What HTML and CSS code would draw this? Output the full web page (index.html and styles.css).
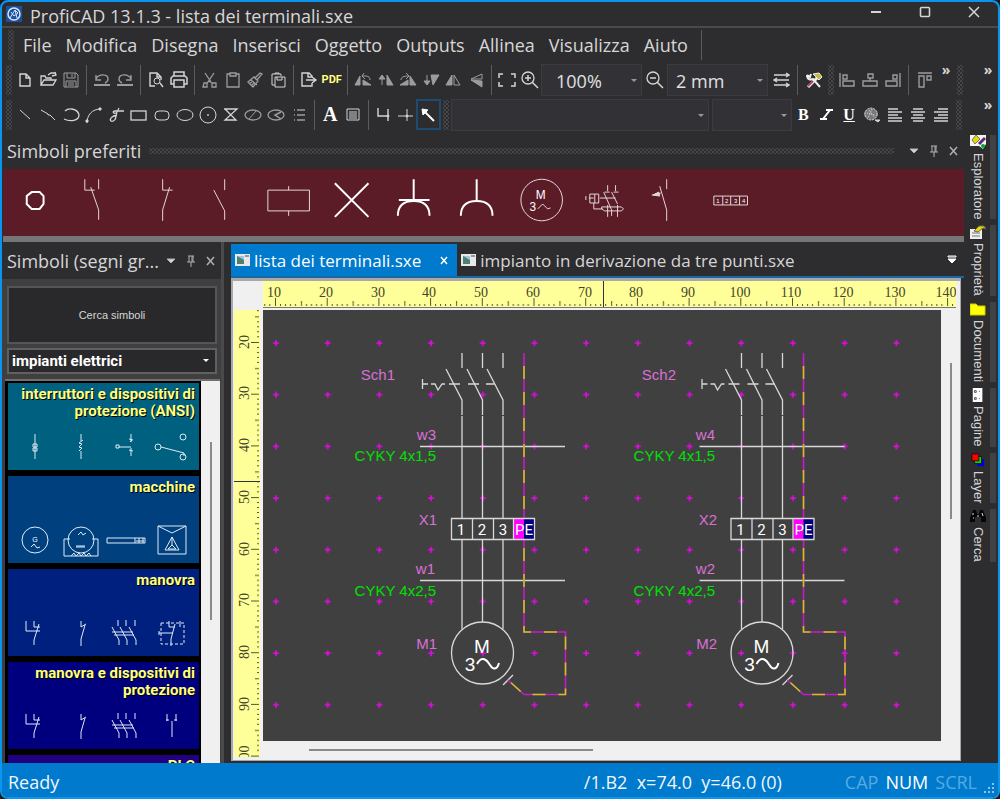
FILE: index.html
```html
<!DOCTYPE html>
<html lang="it">
  <head>
    <meta charset="utf-8">
    <title>ProfiCAD 13.1.3 - lista dei terminali.sxe</title>
    <link rel="stylesheet" href="styles.css">
  </head>
  <body>
    <header class="titlebar">
      <svg class="logo" viewBox="0 0 16 16"><rect width="16" height="16" fill="#1d4f9c"/><circle cx="8" cy="8" r="6" fill="none" stroke="#d5e4f7" stroke-width="1.5"/><path d="M4 12 9 4l3 3-4 3-3-4M9 4l2 8" fill="none" stroke="#d5e4f7"/></svg>
      <h1 class="title">ProfiCAD 13.1.3 - lista dei terminali.sxe</h1>
      <button class="win-btn" aria-label="Riduci"><svg class="icon" viewBox="0 0 18 18"><path d="M4 7h10" stroke-width="2"/></svg></button>
      <button class="win-btn" aria-label="Ingrandisci"><svg class="icon" viewBox="0 0 18 18"><rect x="4.500" y="2.500" width="9" height="9" rx="1" stroke-width="1.600"/></svg></button>
      <button class="win-btn" aria-label="Chiudi"><svg class="icon" viewBox="0 0 18 18"><path d="m4 2 10 10M14 2 4 12" stroke-width="1.500"/></svg></button>
    </header>

    <nav class="menubar">
      <span class="grip"></span>
      <button>File</button>
      <button>Modifica</button>
      <button>Disegna</button>
      <button>Inserisci</button>
      <button>Oggetto</button>
      <button>Outputs</button>
      <button>Allinea</button>
      <button>Visualizza</button>
      <button>Aiuto</button>
      <span class="sep"></span>
    </nav>

    <div class="toolbar">
      <span class="grip"></span>
      <div class="group three">
        <button aria-label="Nuovo"><svg class="icon" viewBox="0 0 18 18"><path d="M4 3h6l4 4v8H4zM10 3v4h4" stroke-width="1.400"/></svg></button>
        <button aria-label="Apri"><svg class="icon" viewBox="0 0 18 18"><path d="M2 14V5h4l1 2h5v2M2 14l3-5h12l-3 5zM9 4l3-2h4M13 5l4-1-1-3" stroke-width="1.300"/></svg></button>
        <button aria-label="Salva"><svg class="icon dim" viewBox="0 0 18 18"><path d="M2 2h12l2 2v12H2zM5 2v5h8V2M10 3v3M4 16v-6h10v6M6 12h6M6 14h6"/></svg></button>
      </div>
      <span class="sep"></span>
      <div class="group two">
        <button aria-label="Annulla"><svg class="icon dim" viewBox="0 0 18 18"><path d="M3 4v5h5M3 8c3-6 12-5 12 0 0 2-1 3-3 4" stroke-width="1.400"/><path d="M1 14h16" stroke-width="2"/></svg></button>
        <button aria-label="Ripeti"><svg class="icon dim" viewBox="0 0 18 18"><path d="M15 4v5h-5M15 8C12 2 3 3 3 8c0 2 1 3 3 4" stroke-width="1.400"/><path d="M1 14h16" stroke-width="2"/></svg></button>
      </div>
      <span class="sep"></span>
      <div class="group two">
        <button aria-label="Anteprima"><svg class="icon" viewBox="0 0 18 18"><path d="M8 15H3V2h7l4 4v3M10 2v4h4M13 12l3 4" stroke-width="1.400"/><circle cx="10" cy="10" r="3"/></svg></button>
        <button aria-label="Stampa"><svg class="icon" viewBox="0 0 18 18"><path d="M4 13H1V7l2-2h12l2 2v6h-3M4 5V1h10v4M4 9h10v7H4z" stroke-width="1.500"/></svg></button>
      </div>
      <span class="sep"></span>
      <div class="group four">
        <button aria-label="Taglia"><svg class="icon dim" viewBox="0 0 18 18"><path d="m4 2 6 9M13 2 7 11M3 12h3v4H2zM11 12h4v4h-4zM6 12l2-2 3 2" stroke-width="1.300"/></svg></button>
        <button aria-label="Copia"><svg class="icon dim" viewBox="0 0 18 18"><path d="M6 3H3v13h12V3h-3M6 2h6v3H6z" stroke-width="1.300"/></svg></button>
        <button aria-label="Copia formato"><svg class="icon dim" viewBox="0 0 18 18"><path d="m2 11 6-5 4 4-5 6zM9 7l5-5 2 1-5 6M4 12l2-1M6 14l2-2M5 9l6 5" stroke-width="1.300"/></svg></button>
        <button aria-label="Incolla"><svg class="icon" viewBox="0 0 18 18"><path d="M6 14H3V3h9v2M6 3V2h4v1M6 6h10v10H6zM8 6v3h5V6"/></svg></button>
      </div>
      <span class="sep"></span>
      <div class="group two">
        <button aria-label="Esporta"><svg class="icon" viewBox="0 0 18 18"><path d="M12 6V5L9 2H2v13h10v-3M8 2v4h4M6 9h10M12 6l4 3-4 3" stroke-width="1.400"/></svg></button>
        <button class="pdf">PDF</button>
      </div>
      <span class="sep"></span>
      <div class="group six">
        <button aria-label="Ruota sinistra"><svg class="icon dim fill" viewBox="0 0 18 18"><path d="M1 14 6 5v9zM9 14V9l8 5z"/><path d="M8 5h4c3 0 4 2 4 4M10 2 8 5l3 3" fill="none"/></svg></button>
        <button aria-label="Capovolgi"><svg class="icon dim fill" viewBox="0 0 18 18"><path d="M5 14V5M2 8l3-4 3 4zM10 14V4l6 10z"/></svg></button>
        <button aria-label="Ruota destra"><svg class="icon dim fill" viewBox="0 0 18 18"><path d="M1 14h8V9zM11 14V5l6 9z"/><path d="M2 9c0-3 3-4 7-4M7 2l3 3-3 3" fill="none"/></svg></button>
        <button aria-label="Capovolgi in basso"><svg class="icon dim fill" viewBox="0 0 18 18"><path d="M5 4v8M2 10l3 4 3-4zM9 4h8l-6 10z"/></svg></button>
        <button aria-label="Specchio orizzontale"><svg class="icon dim" viewBox="0 0 18 18"><path class="solid" d="M2 14 8 4v10z"/><path d="M10 14V4l6 10z"/></svg></button>
        <button aria-label="Specchio verticale"><svg class="icon dim" viewBox="0 0 18 18"><path class="solid" d="m4 9 11 1v6z"/><path d="m4 8 11-5v5z"/></svg></button>
      </div>
      <span class="sep"></span>
      <div class="group two">
        <button aria-label="Adatta"><svg class="icon" viewBox="0 0 18 18"><path d="M5 3H1v4M1 11v4h4M13 3h4v4M17 11v4h-4" stroke-width="1.500"/></svg></button>
        <button aria-label="Ingrandisci vista"><svg class="icon" viewBox="0 0 18 18"><circle cx="7" cy="7" r="6" stroke-width="1.300"/><path d="m11 11 6 6M4 7h6M7 4v6" stroke-width="1.500"/></svg></button>
      </div>
      <label class="combo zoom"><select aria-label="Zoom"><option>100%</option></select></label>
      <button class="tool" aria-label="Riduci vista"><svg class="icon" viewBox="0 0 18 18"><circle cx="7" cy="7" r="6" stroke-width="1.300"/><path d="m11 11 6 6M4 7h6" stroke-width="1.500"/></svg></button>
      <label class="combo zoom step"><select aria-label="Griglia"><option>2 mm</option></select></label>
      <button class="tool" aria-label="Passo"><svg class="icon" viewBox="0 0 18 18"><path d="M2 4h15M2 9h15M2 14h15M14 2l3 2-3 2M5 7 2 9l3 2M14 12l3 2-3 2" stroke-width="1.400"/></svg></button>
      <span class="sep"></span>
      <button class="tool" aria-label="Impostazioni"><svg class="icon" viewBox="0 0 18 18"><path d="M3 16 13 6" stroke="#eee" stroke-width="3"/><path d="M3 15 8 10" stroke="#b33b5b" stroke-width="2"/><path d="M2 4c0 5 4 5 6 4l7 8M2 4l3 2 1-3" stroke="#eee" stroke-width="2"/><path d="m8 3 6-1 3 4-3 3z" fill="#c6b83a" stroke="#eee"/></svg></button>
      <span class="grip"></span>
      <div class="group three">
        <button aria-label="Allinea a sinistra"><svg class="icon dim" viewBox="0 0 18 18"><path d="M2 2v14M5 4h4v4H5zM5 10h11v5H5z" stroke-width="1.400"/></svg></button>
        <button aria-label="Allinea al centro"><svg class="icon dim" viewBox="0 0 18 18"><path d="M7 3h5v4H7zM2 10h14v5H2zM9 7v3" stroke-width="1.400"/></svg></button>
        <button aria-label="Allinea a destra"><svg class="icon dim" viewBox="0 0 18 18"><path d="M16 2v14M9 4h4v4H9zM2 10h11v5H2z" stroke-width="1.400"/></svg></button>
      </div>
      <span class="sep"></span>
      <button class="tool" aria-label="Allinea in alto"><svg class="icon dim" viewBox="0 0 18 18"><path d="M2 2h14M3 5h5v11H3zM11 5h4v4h-4z" stroke-width="1.400"/></svg></button>
      <button class="more">»</button>
      <span class="grip"></span>
      <button class="more end">»</button>
    </div>

    <div class="toolbar">
      <span class="grip"></span>
      <div class="group thirteen">
        <button aria-label="Linea"><svg class="icon" viewBox="0 0 18 18"><path d="m4 4 10 9"/></svg></button>
        <button aria-label="Linea spezzata"><svg class="icon" viewBox="0 0 18 18"><path d="m2 4 7 4v1h2l5 5"/></svg></button>
        <button aria-label="Arco ellittico"><svg class="icon" viewBox="0 0 18 18"><path d="M3 5c4-4 13-2 14 4 0 6-9 7-15 4" stroke-width="1.300"/></svg></button>
        <button aria-label="Curva"><svg class="icon" viewBox="0 0 18 18"><path d="M2 17C2 9 7 3 16 3"/><path class="solid" d="M14 2h2v2h-2zM1 14h2v2H1z"/></svg></button>
        <button aria-label="Bezier"><svg class="icon" viewBox="0 0 18 18"><path d="M17 5H8c-3 0-2 3 1 2M12 2c-2 3-3 5-3 8 0 4-3 6-5 5-2-2 1-5 6-6" stroke-width="1.300"/></svg></button>
        <button aria-label="Rettangolo"><svg class="icon" viewBox="0 0 18 18"><rect x="1" y="5" width="15" height="9" stroke-width="1.300"/></svg></button>
        <button aria-label="Rettangolo arrotondato"><svg class="icon" viewBox="0 0 18 18"><rect x="2" y="5" width="14" height="9" rx="4"/></svg></button>
        <button aria-label="Ellisse"><svg class="icon" viewBox="0 0 18 18"><ellipse cx="9" cy="9" rx="8" ry="5.500"/></svg></button>
        <button aria-label="Cerchio"><svg class="icon" viewBox="0 0 18 18"><circle cx="9" cy="9" r="8"/><circle class="solid" cx="9" cy="9" r=".5"/></svg></button>
        <button aria-label="Poligono"><svg class="icon" viewBox="0 0 18 18"><path d="M3 3h13L4 14h11L4 3" stroke-width="1.300"/></svg></button>
        <button aria-label="Ellisse tagliata"><svg class="icon dim" viewBox="0 0 18 18"><ellipse cx="9" cy="9" rx="8" ry="5" stroke-width="1.300"/><path d="m5 13 7-8"/></svg></button>
        <button aria-label="Settore"><svg class="icon dim" viewBox="0 0 18 18"><ellipse cx="9" cy="9" rx="8" ry="5" stroke-width="1.300"/><path d="m14 6-6 3 6 4" stroke-width="1.500"/></svg></button>
        <button aria-label="Elenco"><svg class="icon dim" viewBox="0 0 18 18"><path d="M4 4h1M4 9h1M4 14h1M7 4h8M7 9h8M7 14h8" stroke-width="1.300"/></svg></button>
      </div>
      <span class="sep"></span>
      <div class="group two">
        <button class="serif">A</button>
        <button aria-label="Tabella"><svg class="icon" viewBox="0 0 18 18"><path d="M3 3h12v11H3zM5 6h8M5 8h8M5 10h8M5 12h8"/></svg></button>
      </div>
      <span class="sep"></span>
      <div class="group three">
        <button aria-label="Collegamento"><svg class="icon" viewBox="0 0 18 18"><path d="M3 2v8h10M13 3v12" stroke-width="1.400"/><circle class="solid" cx="13" cy="10" r="1"/></svg></button>
        <button aria-label="Nodo"><svg class="icon" viewBox="0 0 18 18"><path d="M2 10h15M11 3v12"/><circle class="solid" cx="11" cy="10" r="1"/></svg></button>
        <button class="active" aria-label="Seleziona"><svg class="icon" viewBox="0 0 18 18"><path d="m15 15-9-9" stroke="#fff" stroke-width="2"/><path d="m3 3 6 1-5 5z" fill="#fff" stroke="#fff"/></svg></button>
      </div>
      <span class="grip"></span>
      <label class="combo font"><select aria-label="Carattere"><option></option></select></label>
      <label class="combo size"><select aria-label="Dimensione"><option></option></select></label>
      <div class="group seven">
        <button class="serif small">B</button>
        <button aria-label="Corsivo"><svg class="icon" viewBox="0 0 18 18"><path d="M9 4h7M13 4 6 13M3 13h7" stroke="#fff" stroke-width="2"/></svg></button>
        <button class="serif small under">U</button>
        <button aria-label="Colore"><svg class="icon" viewBox="0 0 18 18"><ellipse class="solid" cx="8" cy="8" rx="6.500" ry="5.500" opacity=".45"/><circle cx="8" cy="8" r="6" stroke-dasharray="2 1"/><path d="m4 7 8 2M6 4l6 8M9 3 5 12" stroke-dasharray="1 1"/><path class="solid" d="M12 14h5l-2 2z"/></svg></button>
        <button aria-label="Testo a sinistra"><svg class="icon" viewBox="0 0 18 18"><path d="M2 3h10M2 6h14M2 9h10M2 12h14M2 15h14" stroke-width="1.500"/></svg></button>
        <button aria-label="Testo al centro"><svg class="icon" viewBox="0 0 18 18"><path d="M4 3h10M2 6h14M4 9h10M2 12h14M4 15h10" stroke-width="1.500"/></svg></button>
        <button aria-label="Testo a destra"><svg class="icon" viewBox="0 0 18 18"><path d="M6 3h10M2 6h14M6 9h10M2 12h14M2 15h14" stroke-width="1.500"/></svg></button>
      </div>
      <span class="grip last"></span>
      <button class="more end">»</button>
    </div>

    <div class="work">
      <main class="content">
        <section class="favorites">
          <div class="panel-head">
            <h2>Simboli preferiti</h2>
            <span class="dots"></span>
            <button aria-label="Menu"><svg class="icon" viewBox="0 0 18 18"><path class="solid" d="M5 7h8l-4 4z"/></svg></button>
            <button aria-label="Blocca"><svg class="icon" viewBox="0 0 18 18"><path d="M6 4h6M7 4v6M11 4v6M5 10h8M9 10v5M10 4v6"/></svg></button>
            <button aria-label="Chiudi"><svg class="icon" viewBox="0 0 18 18"><path d="m5 5 7 8M12 5l-7 8" stroke-width="1.500"/></svg></button>
          </div>
          <div class="favorites-band">
            <div class="favorites-grid">
              <svg class="symbol" viewBox="-32 -33 64 66"><path class="bold" d="M-3-10H5l4 4v8L5 7h-8l-5-5v-8z"/></svg>
              <svg class="symbol" viewBox="-32 -33 64 66"><path d="M-13-23v11h10M-7-15 1 8v10M1-23v10"/></svg>
              <svg class="symbol" viewBox="-32 -33 64 66"><path d="M1-23v11h10M8-15 1 8v11"/></svg>
              <svg class="symbol" viewBox="-32 -33 64 66"><path d="M-11-12 0 9v9M0-23v11"/></svg>
              <svg class="symbol" viewBox="-32 -33 64 66"><path d="M-20-12h42V9h-42zM1-16v4M1 9v5"/></svg>
              <svg class="symbol" viewBox="-32 -33 64 66"><path class="bold" d="m-17-19 34 34M17-19l-34 34"/></svg>
              <svg class="symbol" viewBox="-32 -33 64 66"><path class="bold" d="M-1-23v21M-16-2h31M-17 14C-17 2-10-1-1-1S15 2 15 14"/></svg>
              <svg class="symbol" viewBox="-32 -33 64 66"><path class="bold" d="M-1-23v21M-17 14C-17 2-10-1-1-1S15 2 15 14"/></svg>
              <svg class="symbol" viewBox="-32 -33 64 66"><circle cy="-2" r="21"/><text x="-1" y="-3" font-size="12">M</text><text x="-9" y="9" font-size="12">3</text><path d="m-4 7 5-5 5 5 3-1"/></svg>
              <svg class="symbol" viewBox="-32 -33 64 66"><path d="M-15-8h9v9h-9zM-10-8v9M-19-6v4M-16-4h5M-11 1v6h9M-5-4h16M3-17v6M11-17v6M-1-10 7 8v6M7-10l6 12M3 3v12M13 3v12M0-10h5M9-10h5M-3 5h20l2 2-2 2H0l-3-2z"/></svg>
              <svg class="symbol" viewBox="-32 -33 64 66"><path d="M-1-23v10M-8-16-1 8v11M-16-7l9-2"/><path d="m-15-7 6-3 1 4z" fill="#e3d8da"/></svg>
              <svg class="symbol" viewBox="-32 -33 64 66"><path d="M-18-6h34v9h-34zM-9-6v9M-1-6v9M8-6v9"/><text x="-14" y="1" font-size="6">1</text><text x="-5" y="1" font-size="6">2</text><text x="4" y="1" font-size="6">3</text><text x="12" y="1" font-size="6">4</text></svg>
            </div>
          </div>
        </section>

        <div class="split">
          <aside class="library">
            <div class="panel-head">
              <h2>Simboli (segni gr...</h2>
              <button aria-label="Menu"><svg class="icon" viewBox="0 0 18 18"><path class="solid" d="M5 7h8l-4 4z"/></svg></button>
              <button aria-label="Blocca"><svg class="icon" viewBox="0 0 18 18"><path d="M6 4h6M7 4v6M11 4v6M5 10h8M9 10v5M10 4v6"/></svg></button>
              <button aria-label="Chiudi"><svg class="icon" viewBox="0 0 18 18"><path d="m5 5 7 8M12 5l-7 8" stroke-width="1.500"/></svg></button>
            </div>
            <div class="library-body">
              <button class="search">Cerca simboli</button>
              <label class="combo category"><select aria-label="Categoria"><option>impianti elettrici</option></select></label>
              <div class="library-list">
                <div class="cards">
                  <div class="card teal">
                    <h3>interruttori e dispositivi di protezione (ANSI)</h3>
                    <div class="card-icons">
                      <svg viewBox="-22 -20 44 40"><path d="M0-13v25M-2-3h4v3h-4zM-2 1h4v3h-4z"/></svg>
                      <svg viewBox="-22 -20 44 40"><path d="M0-13v7M0 4v8M2-7l-4 3 3 1-3 3 3 1-3 3"/></svg>
                      <svg viewBox="-22 -20 44 40"><path d="M-10-2h3v3h-3zM-7 0H5M5-13v8M3-8l4 1M4-5l2-2M5 1v8M3 3l4 1"/></svg>
                      <svg viewBox="-22 -20 44 40"><circle cx="-14" r="3"/><circle cx="11" cy="-10" r="3"/><circle cx="11" cy="10" r="3"/><path d="M-11 0 12 6v3"/></svg>
                    </div>
                  </div>
                  <div class="card sea">
                    <h3>macchine</h3>
                    <div class="card-icons">
                      <svg viewBox="-22 -20 44 40"><circle r="13"/><text y="2" font-size="7">G</text><path d="m-4 7 3-3 3 4 3-1"/></svg>
                      <svg viewBox="-22 -20 44 40"><circle r="13"/><path d="M-11-1h-6v17h34V-1h-6M-3-5l3-3 2 3 3-2M-5 6h9M-5 7h9M-10 16l3-3 2 3 3-3 2 3 3-3 2 3 3-3 2 3"/></svg>
                      <svg viewBox="-22 -20 44 40"><path d="M-19-2h38v5h-38zM9-2v5M13-2v5M10 1h8M17-2v5" /></svg>
                      <svg viewBox="-22 -20 44 40"><path d="M-14-14h28v28h-28zM-14-14 0-7l14-7M0-3-7 10H7zM0-3v8l-4 4h8L0 5"/></svg>
                    </div>
                  </div>
                  <div class="card blue">
                    <h3>manovra</h3>
                    <div class="card-icons">
                      <svg viewBox="-22 -20 44 40"><path d="M-9-12v10H5M-1-12v6h6M4-9-1 7v5"/></svg>
                      <svg viewBox="-22 -20 44 40"><path d="M0-12v6l5-3M4-8 0 6v7"/></svg>
                      <svg viewBox="-22 -20 44 40"><path d="M-8-13v6M0-13v6M9-13v6M-14-6-7 7v5M-6-6 1 7v5M3-6 10 7v5M-14-1H7M-12 2H8"/></svg>
                      <svg viewBox="-22 -20 44 40"><path stroke-dasharray="3 2" d="M-11-10h23v21h-23z"/><path d="M-3-12v6h6M3-9-1 6v7M-13 0h14M8-12v6M-13-2v4"/></svg>
                    </div>
                  </div>
                  <div class="card navy">
                    <h3>manovra e dispositivi di protezione</h3>
                    <div class="card-icons">
                      <svg viewBox="-22 -20 44 40"><path d="M-9-12v10H5M-1-12v6h6M4-9-1 7v5"/></svg>
                      <svg viewBox="-22 -20 44 40"><path d="M0-12v6l5-3M4-8 0 6v7"/></svg>
                      <svg viewBox="-22 -20 44 40"><path d="M-8-13v6M0-13v6M9-13v6M-14-6-7 7v5M-6-6 1 7v5M3-6 10 7v5M-14-1H7M-12 2H8"/></svg>
                      <svg viewBox="-22 -20 44 40"><path d="M-5-12v7M4-12v7M0-5v16M-6-6h3M2-6h3"/></svg>
                    </div>
                  </div>
                  <div class="card violet">
                    <h3>PLC</h3>
                  </div>
                </div>
                <div class="scroll-y"><span class="thumb list-thumb"></span></div>
              </div>
            </div>
          </aside>

          <section class="document">
            <div class="tabs">
              <button class="tab selected">
                <svg class="tab-icon" viewBox="0 0 15 12"><rect width="15" height="12" fill="#e8e8e8"/><rect x="2" y="2" width="7" height="8" fill="#4d806f"/><path d="M2 2h7v4z" fill="#9fc4dd"/><path d="M10 2h4" stroke="#446"/></svg>
                <span>lista dei terminali.sxe</span>
                <svg class="icon close" viewBox="0 0 18 18"><path d="m6 6 6 7M12 6l-6 7" stroke="#fff" stroke-width="1.500"/></svg>
              </button>
              <button class="tab">
                <svg class="tab-icon" viewBox="0 0 15 12"><rect width="15" height="12" fill="#e8e8e8"/><rect x="2" y="2" width="7" height="8" fill="#4d806f"/><path d="M2 2h7v4z" fill="#9fc4dd"/><path d="M10 2h4" stroke="#446"/></svg>
                <span>impianto in derivazione da tre punti.sxe</span>
              </button>
              <button class="tab-list" aria-label="Elenco schede"><svg class="icon" viewBox="0 0 18 18"><path d="M5 5h8v1H5z" stroke="#fff"/><path d="M5 8h8l-4 4z" fill="#fff" stroke="#fff"/></svg></button>
            </div>

            <div class="sheet">
              <div class="corner"></div>
              <div class="ruler-x">
                <svg width="694" height="26" viewBox="263 281 694 26">
                  <defs>
                    <pattern id="ticks-x" x="275" y="281" width="51.700" height="26" patternUnits="userSpaceOnUse">
                      <path d="M.5 17v8M5.500 23v2M10.500 23v2M15.500 23v2M20.500 23v2M26.500 20v5M31.500 23v2M36.500 23v2M41.500 23v2M46.500 23v2" stroke="#55552e"/>
                    </pattern>
                  </defs>
                  <rect x="263" y="281" width="694" height="26" fill="url(#ticks-x)"/>
                  <g class="ruler-text">
                    <text x="274" y="297">10</text>
                    <text x="326" y="297">20</text>
                    <text x="378" y="297">30</text>
                    <text x="429" y="297">40</text>
                    <text x="481" y="297">50</text>
                    <text x="533" y="297">60</text>
                    <text x="585" y="297">70</text>
                    <text x="636" y="297">80</text>
                    <text x="688" y="297">90</text>
                    <text x="740" y="297">100</text>
                    <text x="791" y="297">110</text>
                    <text x="843" y="297">120</text>
                    <text x="895" y="297">130</text>
                    <text x="946" y="297">140</text>
                  </g>
                  <path d="M603.500 281v26" stroke="#333"/>
                </svg>
              </div>
              <div class="ruler-y">
                <svg width="26" height="447" viewBox="234 310 26 447">
                  <defs>
                    <pattern id="ticks-y" x="234" y="342" width="26" height="51.700" patternUnits="userSpaceOnUse">
                      <path d="M17 .5h8M23 5.500h2M23 10.500h2M23 15.500h2M23 20.500h2M21 26.500h4M23 31.500h2M23 36.500h2M23 41.500h2M23 46.500h2" stroke="#55552e"/>
                    </pattern>
                  </defs>
                  <rect x="234" y="310" width="26" height="447" fill="url(#ticks-y)"/>
                  <g class="ruler-text">
                    <text transform="translate(249 342) rotate(-90)">20</text>
                    <text transform="translate(249 393) rotate(-90)">30</text>
                    <text transform="translate(249 445) rotate(-90)">40</text>
                    <text transform="translate(249 497) rotate(-90)">50</text>
                    <text transform="translate(249 549) rotate(-90)">60</text>
                    <text transform="translate(249 600) rotate(-90)">70</text>
                    <text transform="translate(249 652) rotate(-90)">80</text>
                    <text transform="translate(249 704) rotate(-90)">90</text>
                    <text transform="translate(249 756) rotate(-90)">100</text>
                  </g>
                  <path d="M234 481.500h26" stroke="#333"/>
                </svg>
              </div>
              <div class="canvas">
                <svg width="678" height="430" viewBox="263 310 678 430">
                  <defs>
                    <pattern id="grid" x="250" y="317" width="51.700" height="51.700" patternUnits="userSpaceOnUse">
                      <path d="M23 26h6M26 23v6" stroke="#f0f" stroke-width="1.300"/>
                    </pattern>
                    <g id="circuit">
                      <g class="wire">
                        <path d="M462 353v15M482.500 353v15M503 353v15M446 369l16 31v118M467 369l15.500 31v118M487 369l16 31v118"/>
                        <path d="M422.500 379v10M423 384h5M431 384h4l3 6 4-6h3M449 384h11M468 384h11M486 384h9M420 446.500h145M420 580.500h145"/>
                        <path d="M462 540v89M482.500 540v82M503 540v89"/>
                        <circle cx="482.500" cy="653" r="31"/>
                        <path d="m503 685 10-10"/>
                      </g>
                      <path d="M461 415.500h43" stroke="#404040"/>
                      <path class="earth" d="M524 353v279h41.500v62.500H524L508 680"/>
                      <path class="earth dash" d="M524 353v279h41.500v62.500H524L508 680"/>
                      <path d="M514 519h10v21h-10z" fill="#f0f"/>
                      <path d="M524 519h10v21h-10z" fill="#000080"/>
                      <path class="wire" d="M451.500 518.500h83v21h-83zM472.500 518.500v21M493.500 518.500v21M513.500 518.500v21"/>
                      <g class="pins">
                        <text x="461" y="535">1</text>
                        <text x="482" y="535">2</text>
                        <text x="503" y="535">3</text>
                        <text x="524" y="535">PE</text>
                      </g>
                      <g class="motor">
                        <text x="482" y="653">M</text>
                        <text x="470" y="671">3</text>
                      </g>
                      <path d="M477 664c5-9 10-4 13 1 3 5 7 5 9-2" fill="none" stroke="#fff" stroke-width="2"/>
                    </g>
                  </defs>
                  <rect x="263" y="330" width="660" height="385" fill="url(#grid)"/>
                  <use href="#circuit"/>
                  <use href="#circuit" x="279.500"/>
                  <g class="tag">
                    <text x="395" y="380">Sch1</text>
                    <text x="436" y="440">w3</text>
                    <text x="437" y="525">X1</text>
                    <text x="435" y="574">w1</text>
                    <text x="437" y="649">M1</text>
                    <text x="676" y="380">Sch2</text>
                    <text x="715" y="440">w4</text>
                    <text x="717" y="525">X2</text>
                    <text x="715" y="574">w2</text>
                    <text x="717" y="649">M2</text>
                  </g>
                  <g class="cable">
                    <text x="436" y="461">CYKY 4x1,5</text>
                    <text x="436" y="596">CYKY 4x2,5</text>
                    <text x="715" y="461">CYKY 4x1,5</text>
                    <text x="715" y="596">CYKY 4x2,5</text>
                  </g>
                </svg>
              </div>
              <div class="scroll-y"><span class="thumb sheet-thumb"></span></div>
              <div class="scroll-x"><span class="thumb"></span></div>
            </div>
          </section>
        </div>
      </main>

      <nav class="side-tabs">
        <button>
          <svg viewBox="0 0 16 14"><path d="M0 0h16v9l-3 5-4-3H0z" fill="#f4f4f4"/><path d="m2 5 4-5 4 4-5 5z" fill="#e8d800" stroke="#777"/><path d="m9 9 6-6" stroke="#5a2a78" stroke-width="3"/><circle cx="13" cy="11" r="2" fill="#0a3"/></svg>
          <span>Esploratore</span>
        </button>
        <button>
          <svg viewBox="0 0 16 14"><path d="M0 4h12v10H0z" fill="#eee"/><path d="M2 8h8M2 11h8" stroke="#777"/><path d="m4 6 5-5h5l2 3-3-1-5 4z" fill="#e8d800" stroke="#665"/></svg>
          <span>Proprietà</span>
        </button>
        <button>
          <svg viewBox="0 0 16 14"><path d="M0 2h6l2 2h7v9H0z" fill="#ff0" stroke="#cc0"/></svg>
          <span>Documenti</span>
        </button>
        <button>
          <svg viewBox="0 0 16 16"><path d="M2 0h11v16H2z" fill="#fff"/><path d="M4 3h2v2H4zM4 11h2v2H4zM9 12h1M9 4h1" fill="none" stroke="#444"/></svg>
          <span>Pagine</span>
        </button>
        <button>
          <svg viewBox="0 0 16 16"><path d="M7 7h8v8H7z" fill="#00d"/><path d="M4 4h8v8H4z" fill="#0d0" stroke="#111"/><path d="M1 1h8v8H1z" fill="#f00" stroke="#111"/></svg>
          <span>Layer</span>
        </button>
        <button>
          <svg viewBox="0 0 16 14"><path d="M3 1h3l1 4h2l1-4h3l3 8v4h-5V8H5v5H0V9z" fill="#060606"/><path d="M3 4v2M3 9h1M12 4l1 3M9 7H7" stroke="#ddd"/></svg>
          <span>Cerca</span>
        </button>
      </nav>
    </div>

    <footer class="statusbar">
      <span class="ready">Ready</span>
      <span class="position">/1.B2&nbsp; x=74.0&nbsp; y=46.0 (0)</span>
      <span class="key">CAP</span>
      <span class="key on">NUM</span>
      <span class="key">SCRL</span>
      <svg class="resize" viewBox="0 0 10 10"><path d="M8 0h2v2H8zM4 4h2v2H4zM8 4h2v2H8zM0 8h2v2H0zM4 8h2v2H4zM8 8h2v2H8z" fill="#8cc3ea"/></svg>
    </footer>
  </body>
</html>
```

FILE: styles.css
```css
* {
  box-sizing: border-box;
}

html {
  height: 100%;
  background: #1b1b1b;
}

body {
  margin: 0;
  height: 100%;
  display: flex;
  flex-direction: column;
  overflow: hidden;
  border: 2px solid #0a95ee;
  border-radius: 8px;
  background: #2d2d30;
  color: #d6d6d6;
  font-family: "Open Sans", "Noto Sans", sans-serif;
  font-size: 18px;
}

button {
  display: flex;
  align-items: center;
  justify-content: center;
  padding: 0;
  border: 0;
  background: none;
  color: inherit;
  font: inherit;
}

h1,
h2,
h3 {
  margin: 0;
  font-size: inherit;
  font-weight: normal;
}

.icon {
  width: 18px;
  height: 18px;
  flex: none;
  fill: none;
  stroke: #d4d4d4;
}

.icon .solid {
  fill: #d4d4d4;
}

.dim {
  stroke: #9c9c9c;
}

.dim .solid,
.dim.fill {
  fill: #9c9c9c;
}

/* title and menu */

.titlebar {
  display: flex;
  align-items: center;
  height: 26px;
  padding-left: 4px;
  border-bottom: 2px solid #4a4a4c;
}

.logo {
  width: 16px;
  height: 16px;
  margin-right: 8px;
}

.title {
  flex: 1;
  line-height: 24px;
  padding-top: 4px;
}

.win-btn {
  width: 49px;
  height: 22px;
}

.menubar {
  display: flex;
  align-items: center;
  height: 34px;
  padding-left: 4px;
}

.menubar button {
  padding: 0 7px;
}

.menubar .sep {
  margin-left: 6px;
}

.grip {
  flex: none;
  width: 6px;
  height: 30px;
  margin: 0 2px;
  background-image: radial-gradient(#58585c 1px, transparent 1px), radial-gradient(#58585c 1px, transparent 1px);
  background-size: 4px 4px;
  background-position: 0 0, 2px 2px;
  opacity: 0.6;
}

.sep {
  flex: none;
  width: 1px;
  height: 30px;
  margin: 0 4px;
  background: #5c5c5e;
}

/* toolbars */

.toolbar {
  display: flex;
  align-items: center;
  height: 35px;
  padding-left: 2px;
}

.group {
  display: flex;
  flex: none;
}

.group button {
  flex: 1;
  height: 31px;
}

.two {
  width: 45px;
}

.three {
  width: 68px;
}

.four {
  width: 90px;
}

.six {
  width: 135px;
}

.seven {
  width: 160px;
}

.thirteen {
  width: 296px;
}

.tool {
  width: 24px;
  height: 30px;
  flex: none;
}

.pdf {
  color: #ffff80;
  font-family: Roboto, sans-serif;
  font-size: 11px;
  font-weight: bold;
}

.serif {
  color: #fff;
  font-family: "Liberation Serif", serif;
  font-size: 20px;
  font-weight: bold;
}

.small {
  font-size: 16px;
}

.under {
  text-decoration: underline;
}

.toolbar .active {
  border: 2px solid #1c4b74;
}

.more {
  align-self: flex-start;
  width: 16px;
  height: 14px;
  margin: 0 1px;
  font-size: 14px;
  font-weight: bold;
}

.more.end {
  margin: 0 2px 0 auto;
}

.combo {
  position: relative;
  flex: none;
  height: 32px;
}

.combo::after {
  content: "";
  position: absolute;
  right: 5px;
  top: 15px;
  border: 3px solid transparent;
  border-top-color: #999;
}

.combo select {
  appearance: none;
  display: block;
  width: 100%;
  height: 100%;
  padding: 0 14px;
  border: 1px solid #3c3c40;
  border-radius: 0;
  background: #323236;
  color: #e0e0e0;
  font: inherit;
}

.combo.zoom {
  width: 101px;
}

.combo.zoom select {
  padding: 2px 0 0 14px;
}

.combo.step select {
  padding-left: 8px;
}

.combo.zoom + .tool {
  width: 25px;
}

.combo.font {
  flex: 1;
  margin-right: 3px;
}

.combo.size {
  width: 80px;
}

.grip.last {
  margin: 0 18px 0 4px;
}

/* panels */

.work {
  flex: 1;
  display: flex;
  min-height: 0;
}

.content {
  flex: 1;
  min-width: 0;
  display: flex;
  flex-direction: column;
}

.panel-head {
  display: flex;
  align-items: center;
  height: 37px;
  padding-left: 5px;
}

.panel-head .icon {
  stroke: #b0b0b0;
}

.panel-head button {
  width: 20px;
  height: 20px;
}

.dots {
  flex: 1;
  height: 6px;
  margin: 0 10px 0 8px;
  background-image: radial-gradient(#58585c 1px, transparent 1px), radial-gradient(#58585c 1px, transparent 1px);
  background-size: 4px 4px;
  background-position: 0 0, 2px 2px;
  opacity: 0.6;
}

.favorites-band {
  height: 73px;
  margin-left: 1px;
  background: #5b1c28;
  border-bottom: 6px solid #767676;
}

.favorites-grid {
  display: grid;
  grid-template-columns: repeat(12, 1fr);
  max-width: 760px;
}

.symbol {
  width: 100%;
  min-width: 0;
  height: 66px;
  fill: none;
  stroke: #e3d8da;
}

.symbol .bold {
  stroke: #fff;
  stroke-width: 2;
}

.symbol text,
.card text {
  fill: #fff;
  stroke: none;
  font-family: "Liberation Sans", sans-serif;
  text-anchor: middle;
}

.split {
  flex: 1;
  display: flex;
  min-height: 0;
}

.library {
  flex: none;
  width: 222px;
  display: flex;
  flex-direction: column;
  border-right: 3px solid #4a4a4c;
}

.library h2 {
  flex: 1;
  white-space: nowrap;
}

.library-body {
  flex: 1;
  display: flex;
  flex-direction: column;
  min-height: 0;
  padding: 7px 1px 0 3px;
  background: #3f3f40;
}

.search {
  flex: none;
  height: 58px;
  margin: 0 3px 4px 2px;
  border: 2px solid #555557;
  background: #29292b;
  font-family: "Liberation Sans", sans-serif;
  font-size: 11px;
}

.combo.category {
  height: 26px;
  margin: 0 3px 5px 2px;
}

.combo.category select {
  padding: 0 3px;
  border: 2px solid #606062;
  background: #29292b;
  color: #fff;
  font-family: Roboto, sans-serif;
  font-size: 15px;
  font-weight: bold;
}

.combo.category::after {
  top: 11px;
  right: 8px;
  border-top-color: #fff;
}

.library-list {
  flex: 1;
  display: flex;
  min-height: 0;
  border-top: 2px solid #707070;
}

.cards {
  flex: 1;
  display: flex;
  flex-direction: column;
  gap: 6px;
  overflow: hidden;
  padding: 2px 2px 0 3px;
  background: #000;
}

.card {
  flex: none;
  height: 87px;
  display: flex;
  flex-direction: column;
  justify-content: space-between;
  padding: 3px 4px;
  color: #ffff80;
}

.card h3 {
  font-family: Roboto, sans-serif;
  font-size: 15px;
  font-weight: bold;
  line-height: 17px;
  text-align: right;
  text-shadow: 1px 1px #000;
}

.card-icons {
  display: flex;
  justify-content: space-around;
}

.card-icons svg {
  width: 44px;
  height: 40px;
  fill: none;
  stroke: #dfeaf5;
}

.teal {
  background: #00607f;
}

.sea {
  background: #00407f;
}

.blue {
  background: #00207f;
}

.navy {
  background: #00007f;
}

.violet {
  background: #20007f;
}

.scroll-y {
  width: 19px;
  background: #f0f0f0;
}

.scroll-x {
  grid-column: 2 / 4;
  background: #f0f0f0;
}

.thumb {
  display: block;
  width: 2px;
  margin: 0 auto;
  background: #8a8a8a;
}

.list-thumb {
  height: 178px;
  margin-top: 61px;
}

.sheet-thumb {
  height: 156px;
  margin-top: 53px;
}

.scroll-x .thumb {
  width: 284px;
  height: 2px;
  margin: 8px 0 0 46px;
}

/* drawing area */

.document {
  flex: 1;
  display: flex;
  flex-direction: column;
  min-width: 0;
  margin: 2px 0 2px 7px;
}

.tabs {
  display: flex;
  height: 34px;
  border-bottom: 2px solid #1767a4;
}

.tab {
  padding: 0 4px;
  white-space: nowrap;
  font-size: 17px;
}

.selected {
  background: #007acc;
  color: #fff;
}

.tab-icon {
  width: 15px;
  height: 12px;
  margin-right: 4px;
}

.close {
  margin-left: 14px;
}

.tab-list {
  width: 24px;
  margin-left: auto;
}

.sheet {
  flex: 1;
  display: grid;
  grid-template-columns: 30px 1fr 19px;
  grid-template-rows: 29px 1fr 19px;
  min-height: 0;
  margin-right: 3px;
  border: solid #a8a8a8;
  border-width: 3px 1px 1px 2px;
  background: #f0f0f0;
}

.ruler-x {
  grid-column: 2 / 4;
  height: 27px;
  margin-right: 4px;
  overflow: hidden;
  background: #ffff99;
  border-bottom: 1px solid #777;
}

.ruler-y {
  grid-row: 2 / 4;
  min-height: 0;
  margin: 0 3px 3px 1px;
  overflow: hidden;
  background: #ffff99;
}

.ruler-text {
  fill: #44442a;
  font-family: "Liberation Serif", serif;
  font-size: 14px;
  text-anchor: middle;
}

.ruler-x svg,
.ruler-y svg,
.canvas svg {
  display: block;
}

.canvas {
  min-width: 0;
  min-height: 0;
  overflow: hidden;
  background: #404040;
}

.wire {
  fill: none;
  stroke: #d8d8d8;
  stroke-width: 1.3;
}

.earth {
  fill: none;
  stroke: #c81ac8;
  stroke-width: 1.6;
}

.dash {
  stroke: #c8c814;
  stroke-dasharray: 13;
  stroke-dashoffset: 13;
}

.pins,
.motor {
  fill: #fff;
  font-family: Roboto, sans-serif;
  font-size: 15px;
  text-anchor: middle;
}

.motor {
  font-family: "Liberation Sans", sans-serif;
  font-size: 19px;
}

.tag,
.cable {
  fill: #da70d6;
  font-family: "Liberation Sans", sans-serif;
  font-size: 15px;
  text-anchor: end;
}

.cable {
  fill: #00e000;
}

/* tabs on the right edge */

.side-tabs {
  flex: none;
  width: 34px;
  display: flex;
  flex-direction: column;
  gap: 6px;
  padding: 3px 2px 0 6px;
}

.side-tabs button {
  flex-direction: column;
  align-items: flex-start;
  gap: 4px;
  border-right: 6px solid #424245;
  font-family: "Liberation Sans", sans-serif;
  font-size: 13px;
  line-height: 16px;
}

.side-tabs svg {
  width: 16px;
  height: 14px;
}

.side-tabs span {
  writing-mode: vertical-rl;
}

/* status bar */

.statusbar {
  flex: none;
  display: flex;
  align-items: center;
  gap: 7px;
  height: 34px;
  padding: 3px 4px 0 6px;
  background: #007acc;
  color: #f0f6fb;
}

.position {
  margin: 0 56px 0 auto;
}

.key {
  color: #5aaae0;
}

.key.on {
  color: #fff;
}

.resize {
  align-self: flex-end;
  width: 10px;
  height: 10px;
  margin-bottom: 4px;
}
```
